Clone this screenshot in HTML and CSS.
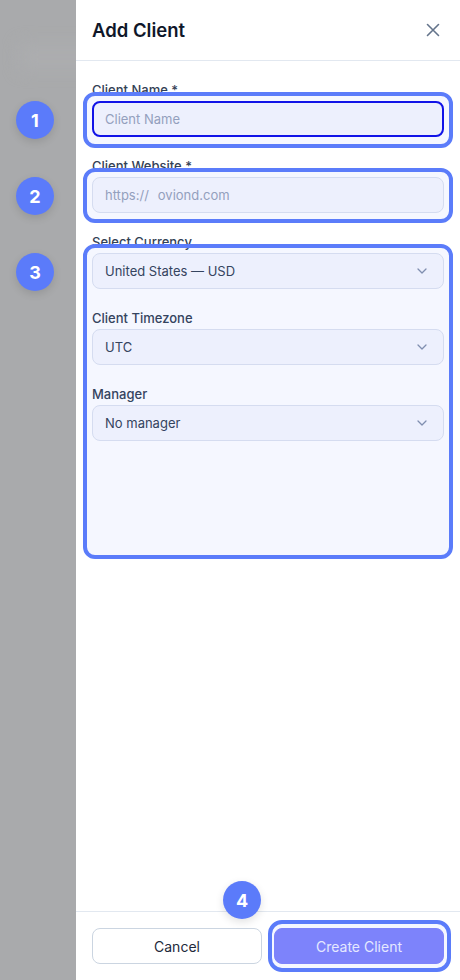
FILE: index.html
```html
<!DOCTYPE html>
<html lang="en">
<head>
<meta charset="utf-8">
<title>Add Client</title>
<link rel="stylesheet" href="styles.css">
</head>
<body>
<div class="screen">
  <div class="backdrop"><div class="ghost"></div></div>
  <aside class="panel">
    <header class="panel-header">
      <h1 class="panel-title">Add Client</h1>
      <button class="close-btn" aria-label="Close">
        <svg width="14" height="14" viewBox="0 0 14 14"><path d="M1.5 1.5 L12.5 12.5 M12.5 1.5 L1.5 12.5" stroke="#64748b" stroke-width="1.6" stroke-linecap="round" fill="none"/></svg>
      </button>
    </header>
    <div class="panel-body">
      <div class="field">
        <label class="field-label">Client Name *</label>
        <div class="input is-focused"><span class="placeholder">Client Name</span></div>
      </div>
      <div class="field">
        <label class="field-label">Client Website *</label>
        <div class="input"><span class="prefix">https://</span><span class="placeholder">oviond.com</span></div>
      </div>
      <div class="field">
        <label class="field-label">Select Currency</label>
        <div class="input select"><span class="value">United States — USD</span><svg class="chev" width="10" height="6" viewBox="0 0 10 6"><path d="M1 1 L5 5 L9 1" stroke="#8390ab" stroke-width="1.3" fill="none" stroke-linecap="round" stroke-linejoin="round"/></svg></div>
      </div>
      <div class="field">
        <label class="field-label">Client Timezone</label>
        <div class="input select"><span class="value">UTC</span><svg class="chev" width="10" height="6" viewBox="0 0 10 6"><path d="M1 1 L5 5 L9 1" stroke="#8390ab" stroke-width="1.3" fill="none" stroke-linecap="round" stroke-linejoin="round"/></svg></div>
      </div>
      <div class="field">
        <label class="field-label">Manager</label>
        <div class="input select"><span class="value">No manager</span><svg class="chev" width="10" height="6" viewBox="0 0 10 6"><path d="M1 1 L5 5 L9 1" stroke="#8390ab" stroke-width="1.3" fill="none" stroke-linecap="round" stroke-linejoin="round"/></svg></div>
      </div>
    </div>
    <footer class="panel-footer">
      <button class="btn btn-cancel">Cancel</button>
      <button class="btn btn-primary">Create Client</button>
    </footer>
  </aside>

  <div class="hl hl-1"></div>
  <div class="hl hl-2"></div>
  <div class="hl hl-3"></div>
  <div class="hl hl-4"></div>

  <div class="badge badge-1">1</div>
  <div class="badge badge-2">2</div>
  <div class="badge badge-3">3</div>
  <div class="badge badge-4">4</div>
</div>
</body>
</html>
```

FILE: styles.css
```css
* { box-sizing: border-box; }
html, body { margin: 0; padding: 0; }
body {
  font-family: Inter, "Noto Sans", "Liberation Sans", sans-serif;
  color: #1e293b;
  background: #a9aaac;
}
.screen {
  position: relative;
  width: 460px;
  height: 980px;
  display: flex;
  overflow: hidden;
}
.backdrop {
  width: 76px;
  flex: none;
  background: #a9aaac;
  position: relative;
  overflow: hidden;
}
.ghost {
  position: absolute;
  left: 20px;
  top: 44px;
  width: 80px;
  height: 26px;
  background: #acadaf;
  filter: blur(8px);
}
.panel {
  flex: 1;
  background: #ffffff;
  display: flex;
  flex-direction: column;
}
.panel-header {
  height: 61px;
  border-bottom: 1px solid #e2e8f0;
  display: flex;
  align-items: center;
  justify-content: space-between;
  padding: 0 16px 0 16px;
}
.panel-title {
  margin: 0;
  font-size: 18.5px;
  font-weight: 600;
  color: #0f172a;
}
.close-btn {
  border: 0;
  background: transparent;
  padding: 0;
  width: 20px;
  height: 20px;
  display: flex;
  align-items: center;
  justify-content: center;
  margin-right: 1px;
}
.panel-body {
  flex: 1;
  padding: 20px 16px;
  display: flex;
  flex-direction: column;
  gap: 20px;
}
.field {
  display: flex;
  flex-direction: column;
  gap: 2px;
}
.field-label {
  font-size: 13px;
  line-height: 18px;
  font-weight: 500;
  color: #334155;
}
.input {
  height: 36px;
  border: 1px solid #dde3f0;
  border-radius: 8px;
  background: #f7f8fd;
  display: flex;
  align-items: center;
  padding: 0 12px;
  font-size: 13px;
}
.input.is-focused {
  border: 2px solid #0d0de6;
  padding: 0 11px;
}
.placeholder { color: #97a3ba; }
.prefix { color: #97a3ba; margin-right: 9px; }
.select { justify-content: space-between; padding-right: 16px; }
.value { color: #334155; }
.chev { display: block; }
.panel-footer {
  border-top: 1px solid #e2e8f0;
  padding: 16px;
  display: flex;
  gap: 12px;
}
.btn {
  flex: 1;
  height: 36px;
  border-radius: 8px;
  font-family: inherit;
  font-size: 14px;
  font-weight: 400;
}
.btn-cancel {
  background: #ffffff;
  border: 1px solid #cbd5e1;
  color: #1e293b;
}
.btn-primary {
  background: #8084fb;
  border: 1px solid #8084fb;
  color: #eef0ff;
}
.hl {
  position: absolute;
  border: 4px solid #5b7cfa;
  background: rgba(91, 124, 250, 0.06);
  border-radius: 12px;
  pointer-events: none;
}
.hl-1 { left: 83px; top: 92px; width: 370px; height: 56px; }
.hl-2 { left: 83px; top: 168px; width: 370px; height: 55px; }
.hl-3 { left: 83px; top: 244px; width: 370px; height: 315px; }
.hl-4 { left: 268px; top: 920px; width: 183px; height: 52px; border-radius: 14px; }
.badge {
  position: absolute;
  width: 38px;
  height: 38px;
  border-radius: 50%;
  background: #5b7bfa;
  color: #ffffff;
  font-size: 18px;
  font-weight: 700;
  display: flex;
  align-items: center;
  justify-content: center;
  box-shadow: 0 3px 8px rgba(0, 0, 0, 0.12);
}
.badge-1 { left: 16px; top: 101px; }
.badge-2 { left: 16px; top: 177px; }
.badge-3 { left: 16px; top: 253px; }
.badge-4 { left: 223px; top: 881px; }
```
